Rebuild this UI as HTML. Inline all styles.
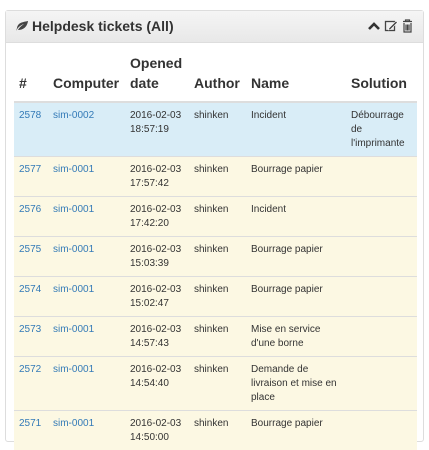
<!DOCTYPE html>
<html><head><meta charset="utf-8"><style>
body{margin:0;background:#fff;font-family:"Liberation Sans",Arial,sans-serif;width:429px;height:425px;overflow:hidden}
.panel{position:absolute;left:5px;top:10px;width:417px;height:430px;border:1px solid #ddd;border-radius:3px;background:#fff}
.hd{height:31px;background:linear-gradient(#f5f5f5,#e8e8e8);border-bottom:1px solid #ddd;position:relative}
.hd .t{position:absolute;left:9px;top:7px;font-weight:bold;font-size:14px;color:#333}
.icons{position:absolute;right:6px;top:7px}
table{position:absolute;left:14px;top:53px;border-collapse:collapse;table-layout:fixed;width:403px}
th{font-size:14px;font-weight:bold;color:#333;text-align:left;vertical-align:bottom;padding:0 5px 8px;line-height:20px;border-bottom:2px solid #ddd}
td{font-size:10px;color:#333;padding:6px 5px 5px;line-height:14px;height:28px;vertical-align:top;border-top:1px solid #ddd;background:#fcf8e3}
tr.i td{background:#d9edf7}
a{color:#337ab7;text-decoration:none}
</style></head><body>
<div class="panel">
<div class="hd"><div class="t"><svg width="14" height="10" viewBox="0 0 14 10" style="margin-right:3px"><path d="M1 10 C3 6 6 4 9 3 C6 5 4 7 3 9 C7 9 12 7 13 0 C9 1 3 1 2 7 Z" fill="#444"/></svg>Helpdesk tickets (All)</div>
<div class="icons"><svg width="50" height="16" viewBox="0 0 50 16"><path d="M2 11 L7 6 L12 11" stroke="#333" stroke-width="2.6" fill="none"/><rect x="18.5" y="3.5" width="9" height="9" fill="none" stroke="#444" stroke-width="1.3"/><path d="M22 10 L29 3 L30.5 4.5 L23.5 11.5 L21.5 12 Z" fill="#444" stroke="#fff" stroke-width=".6"/><path d="M36 3.5 H45 M38.5 3.5 V2 H42.5 V3.5 M37 5 V14 H44 V5 M39 6.5 V12.5 M40.5 6.5 V12.5 M42 6.5 V12.5" stroke="#444" stroke-width="1.2" fill="none"/></svg></div></div>
</div>
<table>
<colgroup><col style="width:34px"><col style="width:77px"><col style="width:64px"><col style="width:57px"><col style="width:100px"><col style="width:71px"></colgroup>
<tr><th>#</th><th>Computer</th><th>Opened date</th><th>Author</th><th>Name</th><th>Solution</th></tr>
<tr class="i"><td><a>2578</a></td><td><a>sim-0002</a></td><td>2016-02-03 18:57:19</td><td>shinken</td><td>Incident</td><td>Débourrage de l'imprimante</td></tr>
<tr><td><a>2577</a></td><td><a>sim-0001</a></td><td>2016-02-03 17:57:42</td><td>shinken</td><td>Bourrage papier</td><td></td></tr>
<tr><td><a>2576</a></td><td><a>sim-0001</a></td><td>2016-02-03 17:42:20</td><td>shinken</td><td>Incident</td><td></td></tr>
<tr><td><a>2575</a></td><td><a>sim-0001</a></td><td>2016-02-03 15:03:39</td><td>shinken</td><td>Bourrage papier</td><td></td></tr>
<tr><td><a>2574</a></td><td><a>sim-0001</a></td><td>2016-02-03 15:02:47</td><td>shinken</td><td>Bourrage papier</td><td></td></tr>
<tr><td><a>2573</a></td><td><a>sim-0001</a></td><td>2016-02-03 14:57:43</td><td>shinken</td><td>Mise en service d'une borne</td><td></td></tr>
<tr><td><a>2572</a></td><td><a>sim-0001</a></td><td>2016-02-03 14:54:40</td><td>shinken</td><td>Demande de livraison et mise en place</td><td></td></tr>
<tr><td><a>2571</a></td><td><a>sim-0001</a></td><td>2016-02-03 14:50:00</td><td>shinken</td><td>Bourrage papier</td><td></td></tr>
</table>
</body></html>
